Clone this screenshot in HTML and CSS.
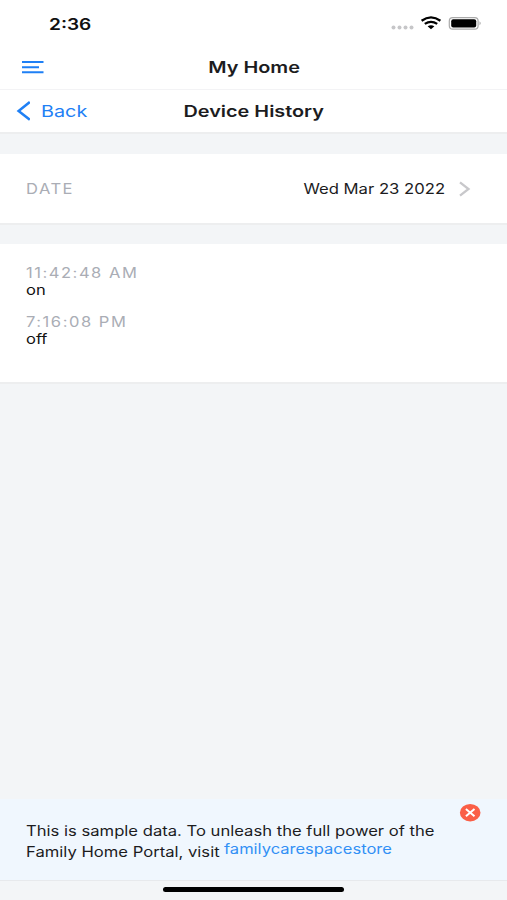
FILE: index.html
```html
<!DOCTYPE html>
<html lang="en">
<head>
<meta charset="utf-8">
<title>Device History</title>
<link rel="stylesheet" href="styles.css">
</head>
<body>
<div class="screen">
  <div class="status">
    <span class="t clock">2:36</span>
    <svg class="status-icons" width="92" height="16" viewBox="0 0 92 16">
      <g fill="#c6c6c8"><circle cx="3.5" cy="13.5" r="2"/><circle cx="9.5" cy="13.5" r="2"/><circle cx="15.5" cy="13.5" r="2"/><circle cx="21.5" cy="13.5" r="2"/></g>
      <g fill="none" stroke="#000" stroke-width="2.3"><path d="M31.6 6.8Q41 0 50.4 6.8"/><path d="M34.8 9.9Q41 5.7 47.2 9.9"/></g>
      <path d="M37.6 12.3Q41 10 44.4 12.3L41 15.2Z"/>
      <rect x="59.3" y="3.6" width="28.8" height="11.6" rx="3.4" fill="#fff" stroke="#aaa" stroke-width="1.2"/>
      <rect x="61.2" y="5.3" width="25" height="8.3" rx="2"/>
      <path d="M89.5 7.3Q92 9.3 89.5 11.3Z" fill="#aaa"/>
    </svg>
  </div>
  <header class="bar top-bar">
    <svg class="menu" width="22" height="14" viewBox="0 0 22 14" stroke="#1f80f5" stroke-width="2"><path d="M0 2H21.5M0 7.2H17M0 12.2H21.5"/></svg>
    <h1 class="t title home">My Home</h1>
  </header>
  <header class="bar sub-bar">
    <a class="back"><svg width="14" height="20" viewBox="0 0 14 20" fill="none" stroke="#1f80f5" stroke-width="2.5"><path d="M13.8 1L2.6 9.9L13.8 18.8"/></svg><span class="t back-label">Back</span></a>
    <h2 class="t title device">Device History</h2>
  </header>
  <section class="card date-card">
    <span class="t label">DATE</span>
    <span class="date-value"><span class="t date-text">Wed Mar 23 2022</span>
    <svg width="12" height="16" viewBox="0 0 12 16" fill="none" stroke="#c8c8cb" stroke-width="2.3"><path d="M1 1.3L9.5 8L1 14.7"/></svg></span>
  </section>
  <section class="card events">
    <div class="event"><span class="t time am">11:42:48 AM</span><span class="t state">on</span></div>
    <div class="event"><span class="t time pm">7:16:08 PM</span><span class="t state">off</span></div>
  </section>
  <footer class="banner">
    <span class="t line one">This is sample data. To unleash the full power of the</span>
    <span class="t line two">Family Home Portal, visit</span>
    <a class="t line link">familycarespacestore</a>
    <svg class="close" width="22" height="18" viewBox="0 0 22 18"><ellipse cx="11.2" cy="8.7" rx="10.3" ry="8.7" fill="#fa5f47"/><path d="M6.9 5.1L15.5 12.3M15.5 5.1L6.9 12.3" stroke="#fff" stroke-width="2"/></svg>
  </footer>
  <div class="home-area"><div class="indicator"></div></div>
</div>
</body>
</html>
```
FILE: styles.css
```css
* { box-sizing: border-box; }
body { margin: 0; font-family: Inter, "Liberation Sans", sans-serif; font-size: 14px; color: #1c1c1e; }
.screen { height: 900px; display: flex; flex-direction: column; background: #f3f5f7; overflow: hidden; }
.t { display: block; width: max-content; white-space: nowrap; line-height: 20px; transform: scaleX(var(--stretch, 1.18)); transform-origin: left; }
.status { height: 45px; flex: none; background: #fff; display: flex; justify-content: space-between; padding: 14px 25px 0 49.4px; }
.clock { padding-top: 1px; font-size: 15.5px; font-weight: 600; color: #111; --stretch: 1.23; }
.bar { flex: none; background: #fff; display: grid; grid-template-columns: 1fr auto 1fr; align-items: center; }
.top-bar { height: 45px; border-bottom: 1px solid #f3f3f5; }
.sub-bar { height: 44px; border-bottom: 2px solid #edeeef; }
.menu { margin-left: 22px; }
.title { margin: 0; padding-left: 1px; font-size: 16px; font-weight: 600; transform-origin: center; --stretch: 1.24; }
.back { display: flex; align-items: center; gap: 11px; padding-left: 16px; color: #1f80f5; }
.back-label { font-size: 16.5px; --stretch: 1.2; }
.card { flex: none; background: #fff; border-bottom: 2px solid #edeeef; }
.date-card { margin-top: 20px; height: 71px; display: flex; align-items: center; justify-content: space-between; padding: 0 36px 0 25.5px; }
.label, .time { color: #aaadb5; letter-spacing: 1.3px; }
.date-value { display: flex; align-items: center; gap: 14px; }
.date-text { transform-origin: right; --stretch: 1.19; }
.events { margin-top: 19px; height: 140px; padding: 20px 25.5px; display: flex; flex-direction: column; gap: 15px; }
.events .t { line-height: 17px; }
.state { color: #111; }
.banner { position: relative; margin-top: auto; height: 82px; flex: none; background: #f0f7fe; border-bottom: 1px solid #e7e9ec; padding: 22px 25.5px; display: grid; grid-template-columns: 198.5px 1fr; grid-auto-rows: 21px; }
.line { --stretch: 1.187; }
.one { grid-column: 1 / 3; }
.link { color: #3290f5; margin-top: -3px; --stretch: 1.18; }
.close { position: absolute; right: 26px; top: 5px; }
.home-area { height: 19px; flex: none; display: flex; justify-content: center; padding-top: 6px; }
.indicator { width: 181px; height: 5px; border-radius: 3px; background: #000; }
```
